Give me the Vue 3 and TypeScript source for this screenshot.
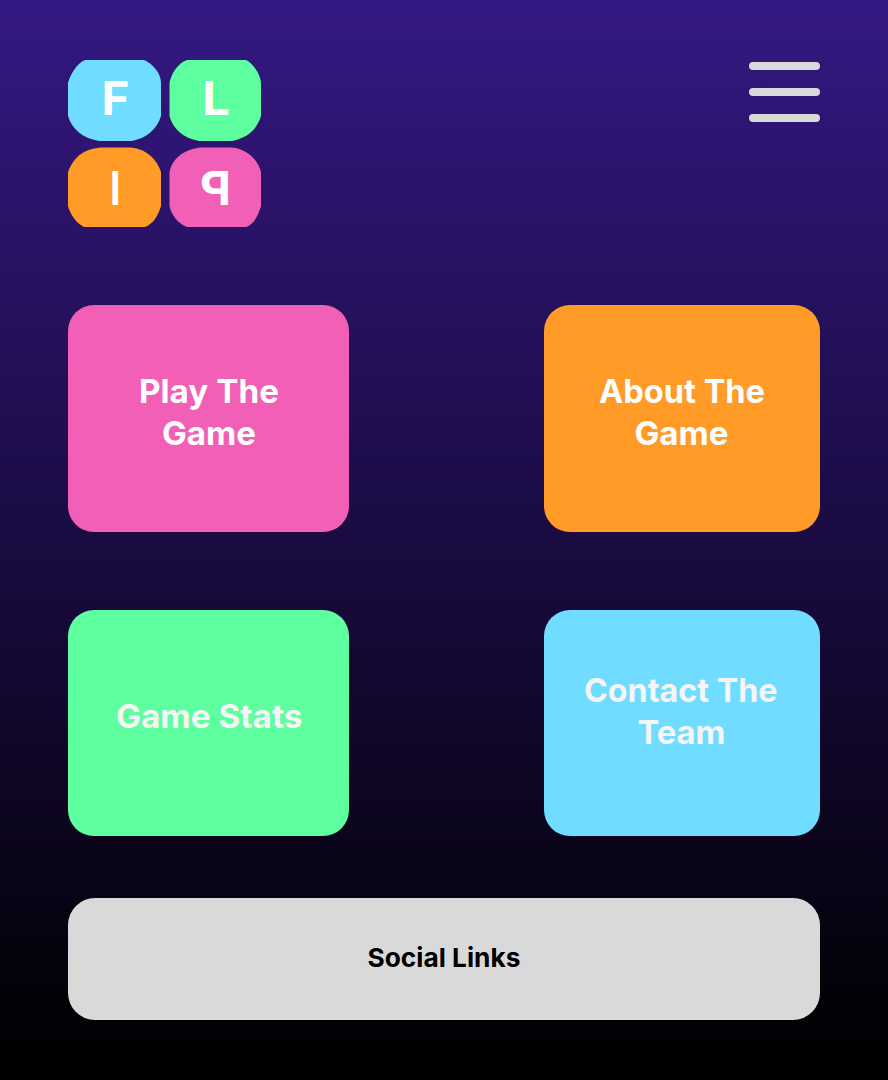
<script setup lang="ts">
interface Line {
  text: string
  x: number
  y: number
  width: number
}

interface Card {
  id: string
  width: number
  height: number
  lines: Line[]
}

const cards: Card[] = [
  {
    id: 'play',
    width: 281,
    height: 227,
    lines: [
      { text: 'Play The', x: 71, y: 98, width: 140 },
      { text: 'Game', x: 94, y: 139.5, width: 94 },
    ],
  },
  {
    id: 'about',
    width: 276,
    height: 227,
    lines: [
      { text: 'About The', x: 55, y: 98, width: 166 },
      { text: 'Game', x: 90.5, y: 139.5, width: 94 },
    ],
  },
  {
    id: 'stats',
    width: 281,
    height: 226,
    lines: [{ text: 'Game Stats', x: 48, y: 118, width: 186.5 }],
  },
  {
    id: 'contact',
    width: 276,
    height: 226,
    lines: [
      { text: 'Contact The', x: 40, y: 92, width: 193.5 },
      { text: 'Team', x: 93.5, y: 134, width: 88 },
    ],
  },
]
</script>

<template>
  <main class="page">
    <header class="header">
      <svg class="logo" viewBox="68 59 194 169" role="img" aria-label="FLIP">
        <path fill="#70dcff" d="M85 60H144C152 63 161 73 161 83V116C157 129 147 138 132 141H99C82 138 72 129 68 116V83C70 75 77 63 85 60Z" />
        <path fill="#5eff9f" d="M187 60H246C253 63 261 75 261 84V116C257 129 248 138 232 141H199C183 138 173 129 169.500 116V83C171 74 178 63 187 60Z" />
        <path fill="#ff9b26" d="M100 147.500H131C147 149 157 160 161 172V206C158 216 153 224 145 227H84C76 223 70 214 68 206V172C73 158 83 149 100 147.500Z" />
        <path fill="#f160b6" d="M201 147.500H232C247 149 258 160 261 172V206C258 216 254 224 246 227H187C178 224 171 214 169.500 206V172C172 158 185 149 201 147.500Z" />
        <text class="letter" x="101.500" y="115" textLength="28" lengthAdjust="spacingAndGlyphs">F</text>
        <text class="letter" x="202" y="115" textLength="28" lengthAdjust="spacingAndGlyphs">L</text>
        <text class="letter" x="110" y="205" textLength="10.500" lengthAdjust="spacingAndGlyphs">I</text>
        <text class="letter" transform="translate(231 205) scale(-1 1)" textLength="31" lengthAdjust="spacingAndGlyphs">P</text>
      </svg>
      <button class="menu" aria-label="Menu">
        <span class="bar"></span>
        <span class="bar"></span>
        <span class="bar"></span>
      </button>
    </header>

    <nav class="cards">
      <a v-for="card in cards" :key="card.id" class="card" :class="card.id">
        <svg class="label" :viewBox="`0 0 ${card.width} ${card.height}`">
          <text
            v-for="line in card.lines"
            :key="line.text"
            :x="line.x"
            :y="line.y"
            :textLength="line.width"
            lengthAdjust="spacingAndGlyphs"
          >{{ line.text }}</text>
        </svg>
      </a>
    </nav>

    <footer class="social">
      <svg class="label" viewBox="0 0 752 122">
        <text x="299.500" y="69" textLength="153" lengthAdjust="spacingAndGlyphs">Social Links</text>
      </svg>
    </footer>
  </main>
</template>

<style>
body {
  margin: 0;
  background: #000;
}
</style>

<style scoped>
.page {
  box-sizing: border-box;
  width: 888px;
  height: 1080px;
  padding: 59px 68px 60px;
  display: flex;
  flex-direction: column;
  overflow: hidden;
  background: linear-gradient(180deg, #341882 0%, #1a0b42 50%, #000 98%);
  font-family: Inter, "Liberation Sans", sans-serif;
  font-weight: 700;
}

.header {
  display: flex;
  justify-content: space-between;
  align-items: flex-start;
  height: 169px;
}

.logo {
  width: 194px;
  height: 169px;
}

.letter {
  font-size: 46.500px;
  fill: #fff;
}

.menu {
  display: flex;
  flex-direction: column;
  gap: 17.500px;
  width: 71px;
  margin-top: 3px;
  padding: 0;
  border: 0;
  background: none;
}

.bar {
  height: 8.300px;
  border-radius: 4px;
  background: #d9d9d9;
}

.cards {
  display: grid;
  grid-template-columns: 281px 276px;
  grid-template-rows: 227px 226px;
  justify-content: space-between;
  row-gap: 78px;
  margin-top: 77px;
}

.card {
  border-radius: 26px;
  overflow: hidden;
}

.label {
  display: block;
  width: 100%;
  height: 100%;
}

.card text {
  font-size: 33px;
  fill: #fff;
}

.play {
  background: #f160b6;
}

.about {
  background: #ff9b26;
}

.stats {
  background: #5eff9f;
}

.contact {
  background: #70dcff;
}

.card.stats text,
.card.contact text {
  fill: #f5f5f5;
}

.card.stats text {
  font-size: 32px;
}

.social {
  height: 122px;
  margin-top: 62px;
  border-radius: 27px;
  background: #d9d9d9;
}

.social text {
  font-size: 26px;
  fill: #000;
}
</style>
